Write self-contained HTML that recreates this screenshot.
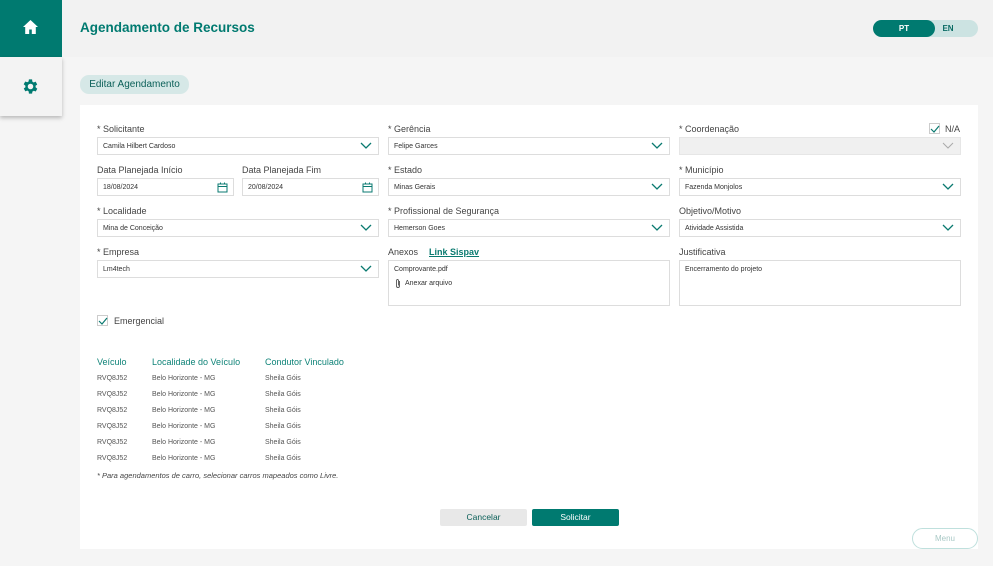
<!DOCTYPE html>
<html><head><meta charset="utf-8"><style>
*{box-sizing:border-box;margin:0;padding:0}
body{width:993px;height:566px;background:#f5f5f5;font-family:"Liberation Sans",sans-serif;position:relative;overflow:hidden;color:#333}
.a{position:absolute}
.lbl{position:absolute;font-size:9px;color:#444}
.inp{position:absolute;height:18px;border:1px solid #ddd;background:#fff;font-size:7px;color:#333;padding:5px 0 0 5px}
.chev{position:absolute;right:6px;top:4px}
.th{font-size:9px;color:#0f8378}
.td{font-size:7px;color:#555}
</style></head><body>
<div class="a" style="left:0;top:0;width:62px;height:57px;background:#007a70"></div>
<svg class="a" style="left:22px;top:19px" width="17" height="16" viewBox="0 0 17 16"><path d="M8.5 1L1 8h2.2v7h4v-4.5h2.6V15h4V8H16z" fill="#fff"/></svg>
<div class="a" style="left:0;top:57px;width:62px;height:59px;background:#f3f3f3;box-shadow:0 2px 4px rgba(0,0,0,.25)"></div>
<svg class="a" style="left:21px;top:77px" width="19" height="19" viewBox="0 0 24 24"><path fill="#007a70" d="M19.4 13a7.5 7.5 0 000-2l2.1-1.6-2-3.5-2.5 1a7.6 7.6 0 00-1.7-1L15 3h-4l-.4 2.7a7.6 7.6 0 00-1.7 1l-2.5-1-2 3.5L6.6 11a7.5 7.5 0 000 2l-2.1 1.6 2 3.5 2.5-1a7.6 7.6 0 001.7 1L11 21h4l.4-2.7a7.6 7.6 0 001.7-1l2.5 1 2-3.5zM13 15.5a3.5 3.5 0 110-7 3.5 3.5 0 010 7z" transform="translate(-1 0)"/></svg>
<div class="a" style="left:62px;top:0;width:931px;height:57px;background:#f2f2f2"></div>
<div class="a" style="left:80px;top:20px;font-size:13.5px;font-weight:bold;color:#007a70">Agendamento de Recursos</div>
<div class="a" style="left:873px;top:20px;width:105px;height:17px;border-radius:9px;background:#cce3e2"></div>
<div class="a" style="left:873px;top:20px;width:62px;height:17px;border-radius:9px;background:#007a70;color:#fff;font-size:8px;font-weight:bold;text-align:center;line-height:17px">PT</div>
<div class="a" style="left:935px;top:20px;width:26px;font-size:8px;font-weight:bold;color:#0a6b64;text-align:center;line-height:17px">EN</div>
<div class="a" style="left:80px;top:75px;width:109px;height:19px;border-radius:9px;background:#d6e8e7;color:#0a5f58;font-size:10px;line-height:19px;text-align:center">Editar Agendamento</div>
<div class="a" style="left:80px;top:105px;width:898px;height:444px;background:#fff"></div>

<div class="lbl" style="left:97px;top:124px">* Solicitante</div>
<div class="inp" style="left:97px;top:137px;width:282px">Camila Hilbert Cardoso<svg class="chev" width="12" height="8"><path d="M1 1l5 5 5-5" stroke="#0a7a70" fill="none" stroke-width="1.3"/></svg></div>
<div class="lbl" style="left:388px;top:124px">* Gerência</div>
<div class="inp" style="left:388px;top:137px;width:282px">Felipe Garces<svg class="chev" width="12" height="8"><path d="M1 1l5 5 5-5" stroke="#0a7a70" fill="none" stroke-width="1.3"/></svg></div>
<div class="lbl" style="left:679px;top:124px">* Coordenação</div>
<div class="a" style="left:929px;top:123px;width:11px;height:11px;border:1px solid #ccc"></div>
<svg class="a" style="left:930px;top:125px" width="10" height="8"><path d="M1 4l3 3 5-6" stroke="#0a7a70" fill="none" stroke-width="1.2"/></svg>
<div class="lbl" style="left:945px;top:124px">N/A</div>
<div class="inp" style="left:679px;top:137px;width:282px;background:#f0f0f0;border-color:#e6e6e6"><svg class="chev" width="12" height="8"><path d="M1 1l5 5 5-5" stroke="#aaa" fill="none" stroke-width="1"/></svg></div>

<div class="lbl" style="left:97px;top:165px">Data Planejada Início</div>
<div class="inp" style="left:97px;top:178px;width:137px">18/08/2024<svg class="a" style="right:5px;top:3px" width="11" height="11"><rect x="1" y="2" width="9" height="8" fill="none" stroke="#0a7a70"/><path d="M1 4.5h9M3.5 0.5v2M7.5 0.5v2" stroke="#0a7a70"/></svg></div>
<div class="lbl" style="left:242px;top:165px">Data Planejada Fim</div>
<div class="inp" style="left:242px;top:178px;width:137px">20/08/2024<svg class="a" style="right:5px;top:3px" width="11" height="11"><rect x="1" y="2" width="9" height="8" fill="none" stroke="#0a7a70"/><path d="M1 4.5h9M3.5 0.5v2M7.5 0.5v2" stroke="#0a7a70"/></svg></div>
<div class="lbl" style="left:388px;top:165px">* Estado</div>
<div class="inp" style="left:388px;top:178px;width:282px">Minas Gerais<svg class="chev" width="12" height="8"><path d="M1 1l5 5 5-5" stroke="#0a7a70" fill="none" stroke-width="1.3"/></svg></div>
<div class="lbl" style="left:679px;top:165px">* Município</div>
<div class="inp" style="left:679px;top:178px;width:282px">Fazenda Monjolos<svg class="chev" width="12" height="8"><path d="M1 1l5 5 5-5" stroke="#0a7a70" fill="none" stroke-width="1.3"/></svg></div>

<div class="lbl" style="left:97px;top:206px">* Localidade</div>
<div class="inp" style="left:97px;top:219px;width:282px">Mina de Conceição<svg class="chev" width="12" height="8"><path d="M1 1l5 5 5-5" stroke="#0a7a70" fill="none" stroke-width="1.3"/></svg></div>
<div class="lbl" style="left:388px;top:206px">* Profissional de Segurança</div>
<div class="inp" style="left:388px;top:219px;width:282px">Hemerson Goes<svg class="chev" width="12" height="8"><path d="M1 1l5 5 5-5" stroke="#0a7a70" fill="none" stroke-width="1.3"/></svg></div>
<div class="lbl" style="left:679px;top:206px">Objetivo/Motivo</div>
<div class="inp" style="left:679px;top:219px;width:282px">Atividade Assistida<svg class="chev" width="12" height="8"><path d="M1 1l5 5 5-5" stroke="#0a7a70" fill="none" stroke-width="1.3"/></svg></div>

<div class="lbl" style="left:97px;top:247px">* Empresa</div>
<div class="inp" style="left:97px;top:260px;width:282px">Lm4tech<svg class="chev" width="12" height="8"><path d="M1 1l5 5 5-5" stroke="#0a7a70" fill="none" stroke-width="1.3"/></svg></div>
<div class="lbl" style="left:388px;top:247px">Anexos</div>
<div class="lbl" style="left:429px;top:247px;color:#0a7a70;font-weight:bold;text-decoration:underline">Link Sispav</div>
<div class="inp" style="left:388px;top:260px;width:282px;height:46px">Comprovante.pdf<div style="margin-top:7px;padding-left:11px;position:relative">Anexar arquivo<svg class="a" style="left:1px;top:-2px" width="6" height="11"><path d="M4.5 3v5a1.5 1.5 0 01-3 0V2.5a1 1 0 012 0V7.5" stroke="#555" fill="none" stroke-width=".9"/></svg></div></div>
<div class="lbl" style="left:679px;top:247px">Justificativa</div>
<div class="inp" style="left:679px;top:260px;width:282px;height:46px">Encerramento do projeto</div>

<div class="a" style="left:97px;top:315px;width:11px;height:11px;border:1px solid #ccc"></div>
<svg class="a" style="left:98px;top:317px" width="10" height="8"><path d="M1 4l3 3 5-6" stroke="#0a7a70" fill="none" stroke-width="1.2"/></svg>
<div class="lbl" style="left:114px;top:316px">Emergencial</div>

<div class="a th" style="left:97px;top:357px">Veículo</div>
<div class="a th" style="left:152px;top:357px">Localidade do Veículo</div>
<div class="a th" style="left:265px;top:357px">Condutor Vinculado</div>
<div class="a td" style="left:97px;top:371px;line-height:16px">RVQ8J52<br>RVQ8J52<br>RVQ8J52<br>RVQ8J52<br>RVQ8J52<br>RVQ8J52</div>
<div class="a td" style="left:152px;top:371px;line-height:16px">Belo Horizonte - MG<br>Belo Horizonte - MG<br>Belo Horizonte - MG<br>Belo Horizonte - MG<br>Belo Horizonte - MG<br>Belo Horizonte - MG</div>
<div class="a td" style="left:265px;top:371px;line-height:16px">Sheila Góis<br>Sheila Góis<br>Sheila Góis<br>Sheila Góis<br>Sheila Góis<br>Sheila Góis</div>
<div class="a" style="left:97px;top:471px;font-size:7.5px;font-style:italic;color:#444">* Para agendamentos de carro, selecionar carros mapeados como Livre.</div>

<div class="a" style="left:440px;top:509px;width:87px;height:17px;background:#e8e8e8;border-radius:2px;font-size:8.5px;color:#0a5f58;text-align:center;line-height:17px">Cancelar</div>
<div class="a" style="left:532px;top:509px;width:87px;height:17px;background:#007a70;border-radius:2px;font-size:8.5px;color:#fff;text-align:center;line-height:17px">Solicitar</div>
<div class="a" style="left:912px;top:528px;width:66px;height:21px;border:1px solid #bfe0dd;border-radius:11px;background:#fff;font-size:8px;text-align:center;line-height:19px;color:#a9c9c6">Menu</div>
</body></html>
